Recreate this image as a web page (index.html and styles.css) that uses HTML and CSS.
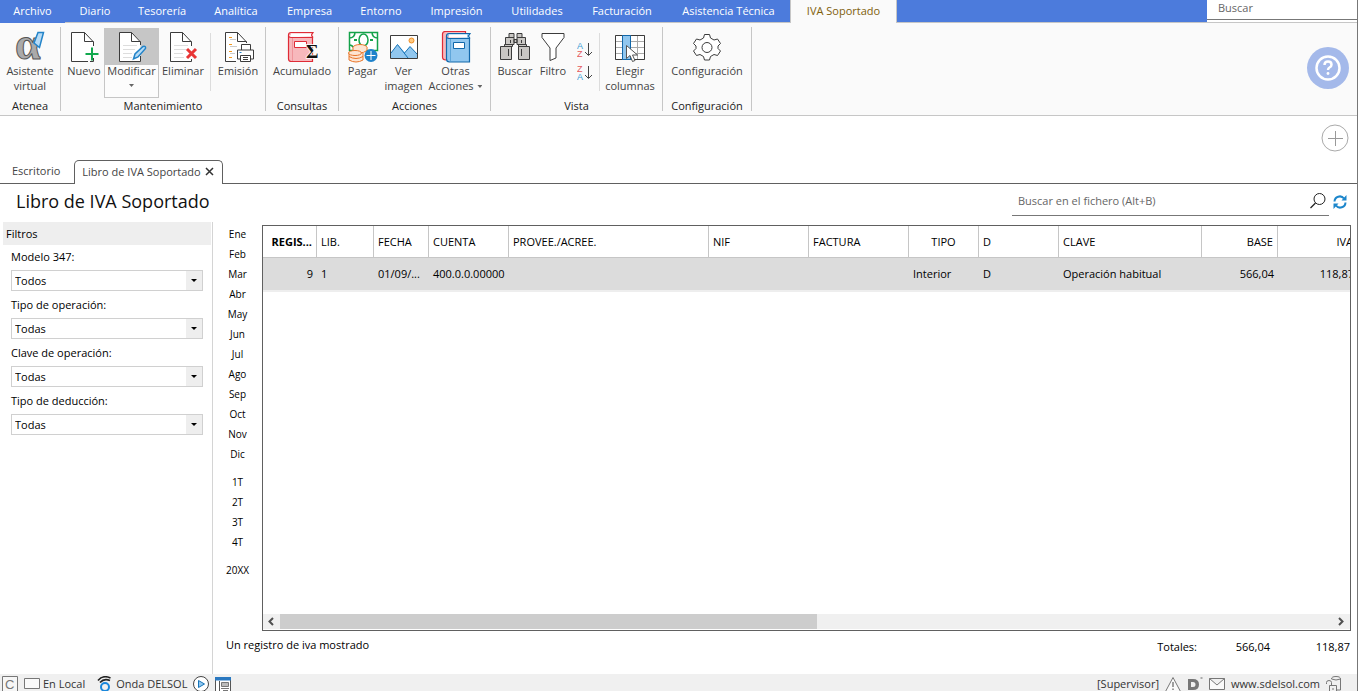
FILE: index.html
```html
<!DOCTYPE html>
<html lang="es">
<head>
<meta charset="utf-8">
<title>Libro de IVA Soportado</title>
<link rel="stylesheet" href="styles.css">
</head>
<body>
<div class="app">
  <header class="menubar">
    <nav class="menu">
      <a class="menu-item file" href="#">Archivo</a>
      <a class="menu-item" href="#">Diario</a>
      <a class="menu-item" href="#">Tesorería</a>
      <a class="menu-item" href="#">Analítica</a>
      <a class="menu-item" href="#">Empresa</a>
      <a class="menu-item" href="#">Entorno</a>
      <a class="menu-item" href="#">Impresión</a>
      <a class="menu-item" href="#">Utilidades</a>
      <a class="menu-item" href="#">Facturación</a>
      <a class="menu-item" href="#">Asistencia Técnica</a>
      <a class="menu-item current" href="#">IVA Soportado</a>
    </nav>
    <div class="menu-search"><input type="search" placeholder="Buscar" aria-label="Buscar"></div>
  </header>

  <div class="ribbon">
    <section class="group g-atenea">
      <div class="tools">
        <button class="tool">
          <svg class="logo" width="32" height="32" viewBox="0 0 32 32"><text x="1" y="28" class="alpha">α</text><path d="M20 12 24 1.500H29.500L25.500 16.500z" fill="#b7dbf5" stroke="#2384c9" stroke-width="1.500"/></svg>
          <span>Asistente<br>virtual</span>
        </button>
      </div>
      <h2>Atenea</h2>
    </section>

    <section class="group g-mant">
      <div class="tools">
        <button class="tool w40">
          <svg width="32" height="32" viewBox="0 0 32 32"><path d="M25.500 15V11L16.500 1.500H3.500V30.500H20M25.500 27v3.500H22M16.500 1.500v9h9" fill="#fff" stroke="#3c3c3c"/><path d="M24 16.500v13M17.500 23h13" stroke="#11a84d" stroke-width="2"/></svg>
          <span>Nuevo</span>
        </button>
        <button class="tool split">
          <svg width="32" height="32" viewBox="0 0 32 32"><path d="M24.500 14V11L15.500 1.500H3.500V30.500H24.500V25M15.500 1.500v9h9" fill="#fff" stroke="#3c3c3c"/><path d="M7 14.500h14M7 18.500h12M7 22.500h9M7 26.500h9" stroke="#ddd"/><path d="M17.500 28l1.500-5 8-7.500q3-1 2.500 2l-7.500 8.500z" fill="#b7dbf5" stroke="#2384c9" stroke-width="1.500"/></svg>
          <span>Modificar</span><i class="caret"></i>
        </button>
        <button class="tool w48">
          <svg width="32" height="32" viewBox="0 0 32 32"><path d="M24.500 15V11L15.500 1.500H3.500V30.500H24.500V28M15.500 1.500v9h9" fill="#fff" stroke="#3c3c3c"/><path d="M7 14.500h14M7 18.500h12M7 22.500h9M7 26.500h10" stroke="#ddd"/><path d="M20 18l9 9M29 18l-9 9" stroke="#e93535" stroke-width="3"/></svg>
          <span>Eliminar</span>
        </button>
        <i class="divider wide"></i>
        <button class="tool w54">
          <svg width="32" height="32" viewBox="0 0 32 32"><path d="M24.500 12V11L15.500 1.500H3.500V30.500H14M15.500 1.500v9h9" fill="#fff" stroke="#3c3c3c"/><path d="M7 6.500h3M7 13.500h3M7 20.500h3M7 26.500h3" stroke="#f39a21"/><path d="M8 8.500h6M8 15.500h7M8 22.500h5" stroke="#ccc"/><path d="M19.500 19v-5.500h9V19M18.500 28h-3v-9h16v9h-3M18.500 24.500h10v6h-10zM21 26.500h5M21 28.500h5" fill="#fff" stroke="#3c3c3c"/><path d="M17.500 21.500h2" stroke="#2384c9"/></svg>
          <span>Emisión</span>
        </button>
      </div>
      <h2>Mantenimiento</h2>
    </section>

    <section class="group g-cons">
      <div class="tools">
        <button class="tool">
          <svg width="32" height="32" viewBox="0 0 32 32"><path d="M2.500 4V28q0 2.500 3 2.500H26.500V6.500H5q-2.500 0-2.500-2.500t2.500-2.500h22l-1.500 2.500 1.500 2.500" fill="#f7b8bc" stroke="#df2b36" stroke-width="1.200"/><path d="M5 2.500h20v3H5z" fill="#fff"/><path d="M6.500 7v23" stroke="#ef959b"/><path d="M8.500 10.500h12v6h-12z" fill="#fff" stroke="#df2b36"/><text x="20" y="27" class="sigma">Σ</text></svg>
          <span>Acumulado</span>
        </button>
      </div>
      <h2>Consultas</h2>
    </section>

    <section class="group g-acc">
      <div class="tools">
        <button class="tool w38">
          <svg width="32" height="32" viewBox="0 0 32 32"><path d="M2.500 1.500h28v18h-28z" fill="#fff" stroke="#14a24a" stroke-width="1.500"/><path d="M2 7q6 0 6-6M31 7q-6 0-6-6M2 14q4 0 6 5" fill="none" stroke="#14a24a" stroke-width="1.500"/><ellipse cx="16.500" cy="9" rx="4.500" ry="6" fill="#fff" stroke="#14a24a" stroke-width="1.500"/><path d="M7 9h3M23 9h3" stroke="#14a24a" stroke-width="2"/><g fill="#fde5d3" stroke="#e9762b"><ellipse cx="13" cy="16.500" rx="7" ry="3"/><path d="M6 16.500v3q7 5 14 0v-3M2 22v7q7 4 14 0v-7M9 22v3"/><ellipse cx="8" cy="22" rx="6.500" ry="2.500"/><path d="M2 25.500q7 4 14 0" fill="none"/></g><circle cx="24" cy="24.500" r="6.500" fill="#1e82cb"/><path d="M24 20v9M19.500 24.500h9" stroke="#fff"/></svg>
          <span>Pagar</span>
        </button>
        <button class="tool w44">
          <svg width="32" height="32" viewBox="0 0 32 32"><path d="M2.500 4.500h27v23h-27z" fill="#fff" stroke="#3c3c3c"/><path d="M3 22l6.500-8.500 7.500 8 5-6 7 7.500V27H3z" fill="#91c7ef"/><path d="M3 22l6.500-8.500L20 27M16.500 22l5.500-6.500 7 7.500" fill="none" stroke="#1674b8"/><circle cx="23.500" cy="9.500" r="2.500" fill="#ffc980" stroke="#ef8d22"/></svg>
          <span>Ver<br>imagen</span>
        </button>
        <button class="tool w60">
          <svg class="nudge" width="32" height="32" viewBox="0 0 32 32"><path d="M6 29q-3.500 0-3.500-3V3q0-2.500 3-2.500h20V5" fill="#f7b8bc" stroke="#df2b36" stroke-width="1.200"/><path d="M6.500 5V28q0 3 3 3H29.500V7.500H9q-2.500 0-2.500-2.500T9 2.500h21L28.500 5l1.500 2.500" fill="#91c7ef" stroke="#1268aa" stroke-width="1.200"/><path d="M9 3.500h18v3H9z" fill="#fff"/><path d="M10.500 8v22" stroke="#5fa6da"/><path d="M13.500 11.500h11v6h-11z" fill="#fff" stroke="#1268aa"/></svg>
          <span>Otras<br>Acciones <i class="caret inline"></i></span>
        </button>
      </div>
      <h2>Acciones</h2>
    </section>

    <section class="group g-vista">
      <div class="tools">
        <button class="tool w38">
          <svg width="32" height="32" viewBox="0 0 32 32"><path d="M10 2.500h5v4h-5zM18 2.500h5v4h-5zM6.500 6.500h8.500v7H6.500zM18 6.500h8.500v7H18zM15 8.500h3v3h-3zM5.500 13.500h8v2h-8zM19.500 13.500h8v2h-8zM1.500 15.500h11v13h-11zM19.500 15.500h11v13h-11z" fill="#c9c7c4" stroke="#3c3c3c"/><path d="M11.500 9v3M22.500 9v3M9.500 18v7M22.500 18v7" stroke="#3c3c3c"/></svg>
          <span>Buscar</span>
        </button>
        <button class="tool w38">
          <svg width="32" height="32" viewBox="0 0 32 32"><path d="M5 2.500h22v4L19 17v10l-6 2.500V17L5 6.500z" fill="#fff" stroke="#3c3c3c"/></svg>
          <span>Filtro</span>
        </button>
        <div class="sorts">
          <button aria-label="Orden ascendente"><svg width="16" height="18" viewBox="0 0 16 18"><text x="0" y="8" class="sort a">A</text><text x="0" y="16" class="sort z">Z</text><path d="M11.500 2v12M8 11l3.500 3.500 3.500-3.500" fill="none" stroke="#444"/></svg></button>
          <button aria-label="Orden descendente"><svg width="16" height="18" viewBox="0 0 16 18"><text x="0" y="8" class="sort z">Z</text><text x="0" y="16" class="sort a">A</text><path d="M11.500 2v12M8 11l3.500 3.500 3.500-3.500" fill="none" stroke="#444"/></svg></button>
        </div>
        <i class="divider"></i>
        <button class="tool w60">
          <svg width="32" height="32" viewBox="0 0 32 32"><path d="M1.500 4.500h29v24h-29zM1.500 10.500h29M1.500 16.500h29M1.500 22.500h29M23.500 4.500v24" fill="#fff" stroke="#aaa"/><path d="M1.500 4.500h29v24h-29z" fill="none" stroke="#3c3c3c"/><path d="M8.500 4.500h8v24h-8z" fill="#91c7ef" stroke="#1268aa"/><path d="M12.500 14.500v13l3.500-3 2.500 6 2.500-1-2.500-5.500h5z" fill="#fff" stroke="#555"/></svg>
          <span>Elegir<br>columnas</span>
        </button>
      </div>
      <h2>Vista</h2>
    </section>

    <section class="group g-conf">
      <div class="tools">
        <button class="tool">
          <svg width="32" height="32" viewBox="0 0 32 32"><path d="M13.500 3.500h5l1 3.500 3.500 2 3.500-1 3 4.500-2.500 2.500v2.500l2.500 2.500-3 4.500-3.500-1-3.500 2-1 3.500h-5l-1-3.500-3.500-2-3.500 1-3-4.500 2.500-2.500V15l-2.500-2.500 3-4.500 3.500 1 3.500-2z" fill="#fff" stroke="#3c3c3c"/><circle cx="16" cy="16.500" r="5" fill="#fff" stroke="#3c3c3c"/></svg>
          <span>Configuración</span>
        </button>
      </div>
      <h2>Configuración</h2>
    </section>
    <button class="help" aria-label="Ayuda"><svg width="42" height="42" viewBox="0 0 42 42"><circle cx="21" cy="21" r="21" fill="#a4b9ea"/><circle cx="21" cy="21" r="11.500" fill="none" stroke="#fff" stroke-width="2.500"/><path d="M17.500 18q0-3.500 3.500-3.500t3.500 3.200q0 1.800-2 2.800-1.500.8-1.500 2.500" fill="none" stroke="#fff" stroke-width="2.500"/><circle cx="21" cy="26.500" r="1.400" fill="#fff"/></svg></button>
  </div>

  <div class="tabstrip">
    <nav class="tabs">
      <a class="tab" href="#">Escritorio</a>
      <div class="tab active"><a href="#">Libro de IVA Soportado</a><button aria-label="Cerrar"><svg width="9" height="9" viewBox="0 0 9 9"><path d="M1 1l7 7M8 1l-7 7" stroke="#333" stroke-width="1.500"/></svg></button></div>
    </nav>
    <button class="add" aria-label="Añadir"><svg width="28" height="28" viewBox="0 0 28 28"><circle cx="14" cy="14" r="13" fill="#fff" stroke="#aaa"/><path d="M14.500 7v15M7 14.500h15" stroke="#999"/></svg></button>
  </div>

  <div class="titlebar">
    <h1>Libro de IVA Soportado</h1>
    <div class="find">
      <input type="search" placeholder="Buscar en el fichero (Alt+B)" aria-label="Buscar en el fichero">
      <svg width="18" height="18" viewBox="0 0 18 18"><circle cx="10.500" cy="7" r="5.500" fill="none" stroke="#222"/><path d="M6.500 11L1.500 16" stroke="#222" stroke-width="1.200"/></svg>
    </div>
    <button class="refresh" aria-label="Actualizar"><svg width="14" height="14" viewBox="0 0 14 14"><path d="M1.500 6.500A5.300 5.300 0 0 1 11 3.500M12.500 7.500A5.300 5.300 0 0 1 3 10.500" fill="none" stroke="#1c86cb" stroke-width="2"/><path d="M13.500 0v5.500H8.500zM.5 14V8.500h5z" fill="#1c86cb"/></svg></button>
  </div>

  <main class="body">
    <aside class="filters">
      <h2>Filtros</h2>
      <label for="f1">Modelo 347:</label>
      <div class="combo"><select id="f1"><option>Todos</option></select></div>
      <label for="f2">Tipo de operación:</label>
      <div class="combo"><select id="f2"><option>Todas</option></select></div>
      <label for="f3">Clave de operación:</label>
      <div class="combo"><select id="f3"><option>Todas</option></select></div>
      <label for="f4">Tipo de deducción:</label>
      <div class="combo"><select id="f4"><option>Todas</option></select></div>
    </aside>
    <div class="content">
      <div class="upper">
        <nav class="periods">
          <div><button>Ene</button><button>Feb</button><button>Mar</button><button>Abr</button><button>May</button><button>Jun</button><button>Jul</button><button>Ago</button><button>Sep</button><button>Oct</button><button>Nov</button><button>Dic</button></div>
          <div><button>1T</button><button>2T</button><button>3T</button><button>4T</button></div>
          <div><button>20XX</button></div>
        </nav>
        <div class="grid">
          <div class="viewport">
            <table>
              <colgroup><col class="c54"><col class="c57"><col class="c55"><col class="c80"><col class="c200"><col class="c100"><col class="c100"><col class="c70"><col class="c80"><col class="c143"><col class="c76"><col class="c80"></colgroup>
              <thead><tr><th class="num sorted">REGIS...</th><th>LIB.</th><th>FECHA</th><th>CUENTA</th><th>PROVEE./ACREE.</th><th>NIF</th><th>FACTURA</th><th class="mid">TIPO</th><th>D</th><th>CLAVE</th><th class="num">BASE</th><th class="num">IVA</th></tr></thead>
              <tbody><tr><td class="num">9</td><td>1</td><td>01/09/...</td><td>400.0.0.00000</td><td></td><td></td><td></td><td>Interior</td><td>D</td><td>Operación habitual</td><td class="num">566,04</td><td class="num">118,87</td></tr></tbody>
            </table>
          </div>
          <div class="scroll">
            <button aria-label="Izquierda"><svg width="16" height="15" viewBox="0 0 16 15"><path d="M10 4L6.500 7.500 10 11" fill="none" stroke="#505050" stroke-width="2"/></svg></button>
            <div class="track"><div class="thumb"></div></div>
            <button aria-label="Derecha"><svg width="16" height="15" viewBox="0 0 16 15"><path d="M6 4l3.500 3.500L6 11" fill="none" stroke="#505050" stroke-width="2"/></svg></button>
          </div>
        </div>
      </div>
      <div class="summary">
        <p>Un registro de iva mostrado</p>
        <div class="totals"><span>Totales:</span><output>566,04</output><output>118,87</output></div>
      </div>
    </div>
  </main>

  <footer class="status">
    <svg class="i-c" width="16" height="16" viewBox="0 0 16 16"><path d="M.5.500h15v15H.5z" fill="#f6f6f6" stroke="#777"/><text x="3" y="13" class="cee">C</text></svg>
    <svg class="i-mon" width="16" height="16" viewBox="0 0 16 16"><path d="M.5 1.500h15v10H.5z" fill="#fafafa" stroke="#777"/><path d="M4 14.500h8" stroke="#777"/></svg>
    <span>En Local</span>
    <svg class="i-wave" width="16" height="16" viewBox="0 0 16 16"><circle cx="8" cy="11" r="4" fill="none" stroke="#1a87db" stroke-width="2"/><path d="M1 4.500Q6-1.500 13.500 2M3 6.500q4-4.500 10-2" fill="none" stroke="#222" stroke-width="1.600"/></svg>
    <span>Onda DELSOL</span>
    <svg class="i-play" width="16" height="16" viewBox="0 0 16 16"><circle cx="8" cy="8" r="7.500" fill="#fff" stroke="#444"/><path d="M5.500 4.500v7l6-3.500z" fill="#91c7ef" stroke="#1674b8"/></svg>
    <svg class="i-win" width="16" height="16" viewBox="0 0 16 16"><path d="M.5 1.500h15v14H.5z" fill="#fff" stroke="#555"/><path d="M0 1h16v3.500H0z" fill="#2a78c0"/><path d="M4.500 5v10" stroke="#555"/><path d="M6.500 6.500h7v4h-7z" fill="#bbb" stroke="#777"/><path d="M6 12.500h8M8 14.500h5" stroke="#777"/></svg>
    <div class="status-right">
      <span>[Supervisor]</span>
      <svg width="16" height="16" viewBox="0 0 16 16"><path d="M8 1.500L15.500 15.500H.5z" fill="#fafafa" stroke="#777"/><path d="M8 6v5M8 12.500v1.500" stroke="#777" stroke-width="1.400"/></svg>
      <svg width="16" height="16" viewBox="0 0 16 16"><path d="M1 3h5q6 0 6 5.500T6 14H1zM4 6v5h2q2.500 0 2.500-2.500T6 6z" fill="#777" fill-rule="evenodd"/><path d="M13.500 1h2v2h-2z" fill="#aaa"/></svg>
      <svg width="16" height="16" viewBox="0 0 16 16"><path d="M.5 2.500h15v11H.5zM.5 2.500L8 9l7.500-6.500" fill="#fafafa" stroke="#777"/></svg>
      <a href="#">www.sdelsol.com</a>
      <svg width="16" height="16" viewBox="0 0 16 16"><path d="M5.500 3q0-2.500 4.500-2.500T14.500 3v11h-4M5.500 3q4.500 2 9 0M.5 8V6.500q0-2 2.500-2t2.500 2v3M3.500 9.500h7v6h-7zM7 12v2" fill="none" stroke="#777"/></svg>
    </div>
  </footer>
</div>
</body>
</html>
```
FILE: styles.css
```css
* { box-sizing: border-box; }
body { margin: 0; font: 11px/15px "Open Sans", "Noto Sans", sans-serif; color: #000; background: #fff; }
button, input, select { font: inherit; color: inherit; border: 0; background: none; padding: 0; margin: 0; outline: 0; }
h1, h2, p { margin: 0; font-weight: 400; }
h2 { font-size: 11px; }
a { color: inherit; text-decoration: none; }
svg { display: block; flex: none; }
.app { display: flex; flex-direction: column; height: 100vh; border-right: 1px solid #777; overflow: hidden; }

/* menu bar */
.menubar { display: flex; height: 23px; background: #4c7bdc; }
.menu { flex: 1; display: grid; grid-template-columns: 65px 60px 74px 74px 73px 70px 81px 80px 90px 123px 107px 1fr; border-bottom: 1px solid #c6c6c6; }
.menu-item { color: #fff; text-align: center; line-height: 22px; white-space: nowrap; height: 22px; }
.menu-item.file { height: 23px; background: #4c7bdc; }
.menu-item.current { height: 23px; background: #fafafa; color: #80600c; border-right: 1px solid #c6c6c6; border-left: 1px solid #c6c6c6; }
.menu-search { width: 150px; background: #fff; border-bottom: 1px solid #c6c6c6; }
.menu-search input { display: block; width: 100%; height: 20px; padding: 0 11px 4px; border-bottom: 1px solid #777; }
input::placeholder { color: #666; opacity: 1; }

/* ribbon */
.ribbon { display: flex; height: 93px; background: #fafafa; border-bottom: 1px solid #c6c6c6; padding: 4px 0; color: #444; }
.group { display: flex; flex-direction: column; border-right: 1px solid #c6c6c6; }
.group h2 { color: #222; text-align: center; line-height: 10px; height: 10px; }
.g-atenea { width: 61px; }
.g-mant { width: 205px; }
.g-cons { width: 73px; }
.g-acc { width: 152px; }
.g-vista { width: 172px; }
.g-conf { width: 89px; }
.tools { height: 74px; display: flex; justify-content: center; }
.g-mant .tools { justify-content: flex-start; padding-left: 3px; }
.g-vista .tools { justify-content: flex-start; padding-left: 5px; }
.tool { display: flex; flex-direction: column; align-items: center; padding-top: 4px; height: 70px; white-space: nowrap; }
.tool span { text-align: center; }
.w38 { width: 38px; }
.w40 { width: 40px; }
.w44 { width: 44px; }
.w48 { width: 48px; }
.w54 { width: 54px; }
.w60 { width: 60px; }
.split { width: 55px; margin-top: 1px; padding-top: 2px; border: 1px solid #c6c6c6; background: linear-gradient(#c6c6c6 36px, #fcfcfc 36px); }
.caret { width: 5px; height: 3px; background: #666; clip-path: polygon(0 0, 100% 0, 50% 100%); margin-top: 6px; }
.caret.inline { display: inline-block; margin: 0 0 2px 1px; }
.divider { width: 1px; background: #dcdcdc; margin-top: 6px; height: 58px; }
.divider.wide { margin-left: 3px; }
.sorts { display: flex; flex-direction: column; gap: 5px; padding: 14px 6px 0 5px; }
.help { margin: 20px 8px 0 auto; align-self: flex-start; }
.logo { overflow: visible; }
.alpha { font: bold 46px "Liberation Serif", serif; fill: #aaa; stroke: #555; stroke-width: 1; }
.sigma { font: bold 19px "Liberation Serif", serif; fill: #111; stroke: #fff; stroke-width: 1.5; paint-order: stroke; }
.sort { font: 9px "Liberation Sans", sans-serif; }
.sort.a { fill: #3b9bd4; }
.sort.z { fill: #e4595d; }

/* document tabs */
.tabstrip { display: flex; justify-content: space-between; align-items: flex-end; height: 68px; border-bottom: 1px solid #606060; color: #444; }
.tabs { display: flex; align-items: flex-end; margin-bottom: -1px; }
.tab { line-height: 22px; height: 24px; padding: 0 14px 0 12px; white-space: nowrap; }
.tab.active { display: flex; align-items: center; gap: 4px; border: 1px solid #606060; border-bottom: 0; border-radius: 5px 5px 0 0; background: #fff; padding: 0 8px 2px 7px; }
.add { align-self: flex-start; margin: 8px 8px 0 0; }

/* title row */
.titlebar { display: flex; height: 38px; padding-right: 10px; }
h1 { flex: 1; font-size: 18px; line-height: 34px; padding-left: 16px; color: #111; }
.find { display: flex; align-items: center; width: 317px; height: 32px; border-bottom: 1px solid #777; padding: 2px 2px 0 6px; }
.find input { flex: 1; }
.refresh { margin: 4px 0 6px 4px; }

/* filters */
.body { flex: 1; display: flex; min-height: 0; }
.filters { display: flex; flex-direction: column; width: 213px; border-right: 1px solid #d4d4d4; padding: 0 1px 0 3px; }
.filters h2 { background: #eee; line-height: 23px; padding-left: 3px; }
.filters label { line-height: 27px; padding-left: 8px; height: 27px; }
.filters h2 + label { line-height: 24px; height: 25px; }
.combo { position: relative; margin: 0 8px; height: 21px; border: 1px solid #d0d0d0; background: linear-gradient(#eee, #eee) right / 16px 100% no-repeat; }
.combo select { display: block; width: 100%; height: 19px; appearance: none; padding-left: 3px; }
.combo::after { content: ""; position: absolute; right: 5px; top: 8px; width: 6px; height: 3px; background: #000; clip-path: polygon(0 0, 100% 0, 50% 100%); pointer-events: none; }

/* ledger */
.content { flex: 1; display: flex; flex-direction: column; min-width: 0; }
.upper { flex: 1; display: flex; min-height: 0; padding: 3px 6px 0 0; }
.periods { width: 49px; display: flex; flex-direction: column; gap: 8px; font-size: 10px; margin-top: -1px; }
.periods button { display: block; width: 100%; line-height: 20px; text-align: center; }
.grid { flex: 1; display: flex; flex-direction: column; min-width: 0; border: 1px solid #606060; }
.viewport { flex: 1; overflow: hidden; }
table { table-layout: fixed; border-collapse: separate; border-spacing: 0; width: 1095px; }
th, td { height: 32px; padding: 0 4px 1px; text-align: left; font-weight: 400; white-space: nowrap; overflow: hidden; text-overflow: ellipsis; }
th { border-right: 1px solid #c6c6c6; border-bottom: 1px solid #c6c6c6; }
td { height: 34px; background: #dcdcdc; border-bottom: 2px solid #eee; }
.num { text-align: right; }
.mid { text-align: center; }
.sorted { font-weight: 700; }
.c54 { width: 54px; }
.c55 { width: 55px; }
.c57 { width: 57px; }
.c70 { width: 70px; }
.c76 { width: 76px; }
.c80 { width: 80px; }
.c100 { width: 100px; }
.c143 { width: 143px; }
.c200 { width: 200px; }
.scroll { display: flex; height: 16px; background: #f0f0f0; border-bottom: 1px solid #fff; }
.scroll button { width: 17px; }
.track { flex: 1; }
.thumb { width: 51%; height: 15px; background: #cdcdcd; }
.summary { display: flex; justify-content: space-between; height: 43px; padding: 6px 7px 0 13px; }
.totals { display: flex; padding-top: 2px; }
.totals output { width: 80px; text-align: right; }
.totals output:first-of-type { width: 73px; }

/* status bar */
.status { display: flex; align-items: center; height: 17px; background: #f0f0f0; padding: 2px 15px 0 2px; color: #333; overflow: hidden; white-space: nowrap; }
.status > svg { margin-top: 1px; }
.status > .i-mon { margin: 2px 3px 0 6px; }
.status > .i-wave { margin: 1px 3px 0 12px; }
.status > .i-play { margin: 1px 6px 0; }
.status-right { display: flex; align-items: center; gap: 6px; margin-left: auto; }
.cee { font: 13px "Liberation Sans", sans-serif; fill: #777; }
```
